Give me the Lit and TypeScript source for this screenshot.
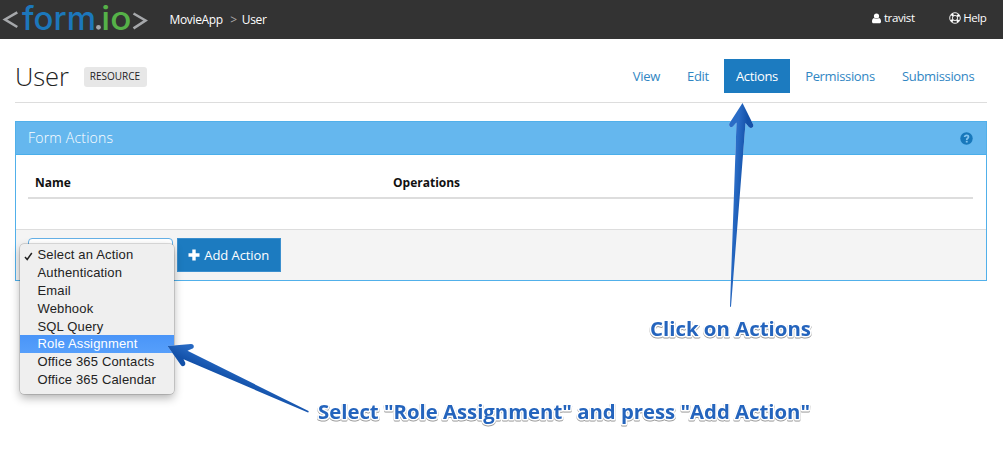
import { LitElement, html, css, svg } from "lit";
import { customElement } from "lit/decorators.js";

const TABS = ["View", "Edit", "Actions", "Permissions", "Submissions"];
const OPTIONS = [
  "Select an Action",
  "Authentication",
  "Email",
  "Webhook",
  "SQL Query",
  "Role Assignment",
  "Office 365 Contacts",
  "Office 365 Calendar",
];

@customElement("form-topbar")
class FormTopbar extends LitElement {
  static styles = css`
    :host { display: flex; height: 39px; background: #333; color: #fff; font-size: 12px; line-height: 16px; letter-spacing: -0.35px; }
    .logo { flex: none; width: 150px; height: 39px; display: block; overflow: visible; }
    .brand { font-family: Inter, "Open Sans", sans-serif; font-size: 33px; font-weight: 500; letter-spacing: 0; }
    .crumbs { display: flex; padding: 12px 0 0 19.5px; }
    .sep { color: #aaa; padding: 0 5px 0 7.5px; }
    .right { margin-left: auto; display: flex; gap: 34px; padding: 10px 16.500px 0 0; font-size: 11.500px; letter-spacing: -0.38px; }
    .link { display: flex; align-items: center; height: 16px; gap: 2.500px; }
  `;
  render() {
    return html`
      <svg class="logo" viewBox="0 0 150 39">
        <g fill="none" stroke="#a6a8ab" stroke-width="2.6">
          <path d="M17.300 12.300 5 19.500 17.300 27" /><path d="M133.500 13.500 145.500 20.500 133.500 28.300" />
        </g>
        <text class="brand" y="29.500" x="22" fill="#1c77bb" textLength="74" lengthAdjust="spacingAndGlyphs">form</text>
        <circle cx="98.500" cy="27.300" r="2.400" fill="#a6a8ab" />
        <text class="brand" y="29.500" x="101.300" fill="#55b148" textLength="30" lengthAdjust="spacingAndGlyphs">io</text>
      </svg>
      <div class="crumbs"><span>MovieApp</span><span class="sep">&gt;</span><span>User</span></div>
      <div class="right">
        <span class="link">
          <svg width="9" height="11" viewBox="0 0 9 11"><circle cx="4.500" cy="3" r="2.600" fill="#fff" /><path d="M2 5C.6 5.300 0 6.800 0 8.700 0 9.600.6 10.200 1.500 10.200h6C8.400 10.200 9 9.600 9 8.700 9 6.800 8.400 5.300 7 5 5.600 6.400 3.400 6.400 2 5z" fill="#fff" /></svg>
          <span>travist</span>
        </span>
        <span class="link">
          <svg width="12" height="12" viewBox="0 0 12 12" fill="none" stroke="#fff"><circle cx="6" cy="6" r="5.300" stroke-width=".9" /><circle cx="6" cy="6" r="2.600" stroke-width=".9" /><circle cx="6" cy="6" r="4" stroke-width="2.600" stroke-dasharray="2.200 4.083" stroke-dashoffset="-2.040" /></svg>
          <span>Help</span>
        </span>
      </div>
    `;
  }
}

@customElement("action-menu")
class ActionMenu extends LitElement {
  static styles = css`
    :host { display: block; box-sizing: border-box; width: 154px; height: 150px; padding: 2px 0 0; background: #efefef; border-radius: 4px; box-shadow: 0 0 0 .5px rgba(0,0,0,.25), 0 4px 10px rgba(0,0,0,.3); font: 13px/17.500px "Liberation Sans", Arial, sans-serif; letter-spacing: .16px; color: #222; overflow: hidden; }
    .row { display: flex; height: 17.900px; white-space: nowrap; }
    .mark { flex: none; width: 17.500px; }
    .tick { display: block; margin: 6px 0 0 4px; }
    .active { background: linear-gradient(#4a95f8, #569ffb); color: #fff; }
  `;
  render() {
    return html`${OPTIONS.map(
      (o, i) => html`<div class="row ${o === "Role Assignment" ? "active" : ""}">
        <span class="mark">${i === 0
          ? html`<svg class="tick" width="9" height="9" viewBox="0 0 9 9"><path d="M1 5 3.200 7.500 7.800 1" fill="none" stroke="#222" stroke-width="1.500" /></svg>`
          : ""}</span><span>${o}</span>
      </div>`
    )}`;
  }
}

@customElement("app-root")
class AppRoot extends LitElement {
  static styles = css`
    :host { display: block; position: relative; width: 1003px; height: 462px; overflow: hidden; background: #fff; font-family: "Open Sans", sans-serif; color: #222; }
    .page { padding: 0 16px 0 15px; }
    .heading { display: flex; height: 63px; border-bottom: 1px solid #ddd; }
    .title { margin: 0; padding: 20px 0 0; font-size: 25.500px; line-height: 34px; font-weight: 300; width: 68.500px; letter-spacing: -0.1px; }
    .badge { margin-top: 28px; height: 20px; width: 63px; border-radius: 3px; background: #e7e7e7; font-size: 10px; line-height: 19px; text-align: center; }
    .tabs { margin: 0 .600px 0 auto; display: flex; gap: 3px; padding-top: 20px; height: 34px; font-size: 13px; line-height: 34px; letter-spacing: -0.34px; color: #3186c3; }
    .tab { padding: 0 12.100px; }
    .current { background: #1c7bc0; color: #fff; }
    .panel { margin-top: 18px; height: 160px; box-sizing: border-box; border: 1px solid #51b0ea; display: flex; flex-direction: column; }
    .panel-head { display: flex; align-items: center; justify-content: space-between; height: 32px; padding: 0 13px 0 12px; background: #65b7ee; border-bottom: 1px solid #4aaeea; color: #fff; font-size: 14px; font-weight: 300; }
    .panel-title { letter-spacing: .22px; padding-bottom: 2px; }
    .body { flex: 1; padding: 13px 13px 0 12px; }
    .cols { display: grid; grid-template-columns: 358px 1fr; padding: 6px 7px 5px; border-bottom: 2px solid #ddd; font-size: 12px; line-height: 18px; font-weight: 700; color: #111; }
    .foot { display: flex; gap: 4px; height: 42px; padding: 8px 12px 0; background: #f4f4f4; border-top: 1px solid #ddd; }
    .select { box-sizing: border-box; width: 145px; height: 33px; border: 1px solid #65b0e6; border-radius: 4px; background: #fff; }
    .add { display: flex; align-items: center; justify-content: center; gap: 4px; box-sizing: border-box; width: 103.500px; height: 34px; background: #1c7bc0; border: 1px solid #3b8fce; color: #fff; font-size: 13px; letter-spacing: -0.08px; }
    .menu { position: absolute; left: 20px; top: 244px; }
    .overlay { position: absolute; left: 0; top: 0; pointer-events: none; }
    .note { font-family: "Open Sans", sans-serif; font-size: 19px; font-weight: 700; fill: #2464bd; stroke: #fff; stroke-width: 3px; stroke-linejoin: round; paint-order: stroke; filter: drop-shadow(0 1px .7px rgba(0,0,0,.4)); }
    .arrow { filter: drop-shadow(0 0 .5px rgba(255,255,255,.8)); }
  `;
  render() {
    return html`
      <form-topbar></form-topbar>
      <main class="page">
        <header class="heading">
          <h1 class="title">User</h1>
          <span class="badge">RESOURCE</span>
          <nav class="tabs">${TABS.map((t) => html`<span class="tab ${t === "Actions" ? "current" : ""}">${t}</span>`)}</nav>
        </header>
        <section class="panel">
          <div class="panel-head">
            <span class="panel-title">Form Actions</span>
            <svg width="13" height="13" viewBox="0 0 13 13"><circle cx="6.500" cy="6.500" r="6.200" fill="#1878bb" /><path d="M4.600 5.100C4.600 2.800 8.500 2.900 8.500 5 8.500 6.300 6.700 6.300 6.700 7.900" fill="none" stroke="#83c4f0" stroke-width="1.700" /><path d="M5.800 8.800h1.900v1.700H5.800z" fill="#83c4f0" /></svg>
          </div>
          <div class="body"><div class="cols"><span>Name</span><span>Operations</span></div></div>
          <div class="foot">
            <div class="select"></div>
            <div class="add">
              <svg width="12" height="12" viewBox="0 0 12 12"><path d="M6 .5v11M.5 6h11" stroke="#fff" stroke-width="3.400" /></svg>
              <span>Add Action</span>
            </div>
          </div>
        </section>
      </main>
      <action-menu class="menu"></action-menu>
      <svg class="overlay" width="1003" height="462" viewBox="0 0 1003 462">
        <defs>
          <linearGradient id="up" gradientUnits="userSpaceOnUse" x1="734" y1="200" x2="743" y2="200.500"><stop offset="0" stop-color="#2a6cc6" /><stop offset="1" stop-color="#1351a9" /></linearGradient>
          <linearGradient id="side" gradientUnits="userSpaceOnUse" x1="222" y1="363" x2="217" y2="374"><stop offset="0" stop-color="#2567c1" /><stop offset="1" stop-color="#1351a9" /></linearGradient>
        </defs>
        ${svg`<path class="arrow" fill="url(#up)" d="M742.500 103 753.200 124.500C754.200 127.500 751 129.200 748.800 127L745.500 123 731 306.500Q730.500 307.300 730 306.500L736.500 122.500 733.200 126.300C731 128.300 728.400 126.500 729.300 123.500z" />
        <path class="arrow" fill="url(#side)" d="M167.500 346 191 344C194.500 344 194.600 348 192 348.800L187.500 350.800 308.500 411Q309 412.500 308 412.500L183.500 359.300 185.200 362.500C186 365.800 182.500 367.500 180.800 365z" />`}
        <text class="note" x="650" y="335.600" textLength="161" lengthAdjust="spacingAndGlyphs">Click on Actions</text>
        <text class="note" x="318" y="418.700" textLength="492" lengthAdjust="spacingAndGlyphs">Select "Role Assignment" and press "Add Action"</text>
      </svg>
    `;
  }
}
